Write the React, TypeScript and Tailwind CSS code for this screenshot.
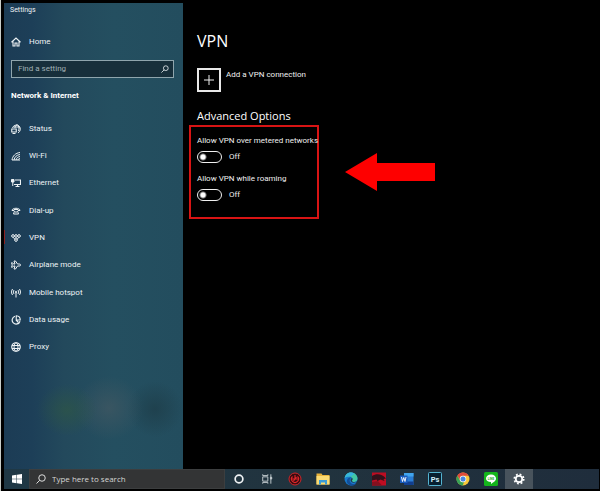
import type { ReactNode } from "react";

function Glyph({ children, size = "size-[10px]", box = "0 0 20 20" }: { children: ReactNode; size?: string; box?: string }) {
  return (
    <svg viewBox={box} className={`${size} shrink-0`} fill="none" stroke="currentColor" strokeWidth="2" aria-hidden="true">
      {children}
    </svg>
  );
}

const globe = (
  <>
    <circle cx="10" cy="10" r="8.500" strokeWidth="2.400" />
    <ellipse cx="10" cy="10" rx="4" ry="8.500" />
    <path d="M2 7h16M2 13h16" />
  </>
);

const items: { label: string; icon: ReactNode; active?: boolean }[] = [
  {
    label: "Status",
    icon: (
      <>
        <path d="M3 8a8 8 0 1 1 11 9.500M5 6h13M12 1c-3 2-4 5-4 7M13 1c3 3 4 8 2 13" />
        <path d="M1.500 10h9v6h-9zM3 19h6" strokeWidth="2.200" />
      </>
    ),
  },
  {
    label: "Wi-Fi",
    icon: <path d="M2 18C3 10 9 4 18 3M6 18c1-6 5-10 12-11M10 18c1-4 3-6 8-7M14 18c0-2 2-3 4-3M2 18h16" />,
  },
  {
    label: "Ethernet",
    icon: (
      <>
        <path d="M8 4h11v9H6M9 17h8M13 13v4" strokeWidth="2.300" />
        <path d="M1 3h5v5H1zM3.500 8v8" fill="currentColor" />
      </>
    ),
  },
  {
    label: "Dial-up",
    icon: (
      <>
        <path d="M2 9c0-6 16-6 16 0h-4V7H6v2z" />
        <path d="M7 10l-2 6h10l-2-6M8 12h4" />
      </>
    ),
  },
  {
    label: "VPN",
    active: true,
    icon: (
      <>
        <circle cx="4" cy="6" r="2.700" />
        <circle cx="10" cy="6" r="2.700" />
        <circle cx="16" cy="6" r="2.700" />
        <circle cx="10" cy="14" r="2.700" />
        <path d="M5 9l3 4M15 9l-3 4" />
      </>
    ),
  },
  {
    label: "Airplane mode",
    icon: (
      <path d="M19 10c0-1.500-1-2-2-2h-4L9 2H6l2 6H5L3 5.500H1L2.500 10 1 14.500h2L5 12h3l-2 6h3l4-6h4c1 0 2-.5 2-2z" />
    ),
  },
  {
    label: "Mobile hotspot",
    icon: (
      <>
        <circle cx="10" cy="8" r="1.500" />
        <path d="M10 9v10M6.500 12a5 5 0 0 1 0-8M13.500 12a5 5 0 0 0 0-8M3 14A9 9 0 0 1 3 2M17 14a9 9 0 0 0 0-12" />
      </>
    ),
  },
  {
    label: "Data usage",
    icon: (
      <>
        <path d="M8 2.500a8 8 0 1 0 10 10" strokeWidth="2.400" />
        <path d="M10.500 10V1.500a8.500 8.500 0 0 1 8 8.500zM10 10l5 5" strokeWidth="2.200" />
      </>
    ),
  },
  { label: "Proxy", icon: globe },
];

function Sidebar() {
  return (
    <aside className="flex w-[179px] shrink-0 flex-col bg-[radial-gradient(ellipse_30px_26px_at_63px_407px,rgba(48,88,66,0.6),transparent),radial-gradient(ellipse_34px_32px_at_105px_405px,rgba(66,88,98,0.7),transparent),radial-gradient(ellipse_28px_28px_at_151px_406px,rgba(30,62,74,0.8),transparent),linear-gradient(90deg,#1c3c55_0px,#1d3f58_28px,#23495c_60px,#244f60_110px,#234d5e_180px)] text-[#eef3f5]">
      <div className="px-1.5 pt-px text-[7px] leading-3">Settings</div>
      <a href="#home" className="mx-[7px] mt-[18px] flex h-4 items-center gap-2 text-[8px] leading-4">
        <Glyph>
          <path d="M1 10.500L10 2l9 8.500M4 9v9h4v-6h4v6h4V9" strokeWidth="2.200" />
        </Glyph>
        Home
      </a>
      <label className="mr-[9px] ml-[7px] mt-[10px] flex h-[18px] items-center border border-[#8fa5ad] bg-[#172f3b] pr-1 pl-1.5">
        <input
          type="search"
          aria-label="Find a setting"
          placeholder="Find a setting"
          className="min-w-0 flex-1 bg-transparent text-[8px] leading-4 outline-none placeholder:text-[#a1b0b6]"
        />
        <Glyph size="size-2">
          <circle cx="12" cy="8" r="6" />
          <path d="M8 12l-7 7" />
        </Glyph>
      </label>
      <h2 className="mt-[10px] px-[7px] text-[8px] leading-4 font-bold text-white">Network &amp; Internet</h2>
      <ul className="mt-[11px] grid h-[246px] grid-rows-9">
        {items.map((item) => (
          <li key={item.label} className="relative flex">
            {item.active && <span className="absolute top-1.5 left-0 h-3.5 w-px bg-[#8c2224]" />}
            <a href={`#${item.label}`} className="flex flex-1 items-center gap-2 pl-[7px] text-[8px] leading-4">
              <Glyph>{item.icon}</Glyph>
              {item.label}
            </a>
          </li>
        ))}
      </ul>
    </aside>
  );
}

function Toggle({ label }: { label: string }) {
  return (
    <label className="block text-[8px] leading-3 whitespace-nowrap">
      {label}
      <span className="mt-1 flex items-center gap-[7px]">
        <input
          type="checkbox"
          role="switch"
          className="h-3 w-[25px] shrink-0 appearance-none rounded-full border border-[#f0f0f0] bg-[radial-gradient(circle_at_5px_5px,#fff_2px,transparent_4px)]"
        />
        <span>Off</span>
      </span>
    </label>
  );
}

function Content() {
  return (
    <main className="min-w-0 flex-1 pl-[6px] text-[#f0f0f0]">
      <div className="pl-2">
        <h1 className="pt-[26px] font-['Open_Sans',sans-serif] text-[16px] leading-6 text-white">VPN</h1>
        <button type="button" className="mt-[15px] flex items-start gap-[5px] text-[8px] leading-[14px]">
          <span className="grid size-6 place-items-center border-2 border-[#e8e8e8]">
            <Glyph>
              <path d="M10 0v20M0 10h20" />
            </Glyph>
          </span>
          Add a VPN connection
        </button>
        <h2 className="mt-4 font-['Open_Sans',sans-serif] text-[11px] leading-4 text-white">Advanced Options</h2>
      </div>
      <div className="mt-px flex items-center gap-[26px]">
        <div className="flex h-[94px] w-[130px] flex-col gap-[10px] border-2 border-[#d81414] pt-2 pl-1.5">
          <Toggle label="Allow VPN over metered networks" />
          <Toggle label="Allow VPN while roaming" />
        </div>
        <svg viewBox="0 0 90 38" className="h-[38px] w-[90px] shrink-0 fill-[#fe0000]" aria-hidden="true">
          <path d="M0 19L32 0v10h58v18H32v10z" />
        </svg>
      </div>
    </main>
  );
}

const apps: { name: string; icon: ReactNode; active?: boolean }[] = [
  { name: "Cortana", icon: <circle cx="14" cy="14" r="9" fill="none" stroke="#eef2f4" strokeWidth="4" /> },
  {
    name: "Task View",
    icon: (
      <g fill="none" stroke="#c3ccd0" strokeWidth="2.200">
        <path d="M4 9h12v10H4zM4 3v3h12V3M4 25v-3h12v3M23 3v22" />
        <path d="M22 10h3v4h-3z" fill="#c3ccd0" />
      </g>
    ),
  },
  {
    name: "Power",
    icon: (
      <>
        <circle cx="14" cy="14" r="12" fill="#3a0c10" stroke="#cf2529" strokeWidth="2" />
        <path d="M14 6v8M9 9a7 7 0 1 0 10 0M8 14h12M11 18l6-8" fill="none" stroke="#e2272b" strokeWidth="2.200" />
      </>
    ),
  },
  {
    name: "File Explorer",
    icon: (
      <>
        <path d="M1 3h10l2 3h14v19H1z" fill="#e8b33c" />
        <path d="M1 8h26v17H1z" fill="#fbdb73" />
        <path d="M6 25v-9h16v9h-4v-4h-8v4z" fill="#3b9bd6" />
      </>
    ),
  },
  {
    name: "Edge",
    icon: (
      <>
        <circle cx="14" cy="14" r="13" fill="#1879cc" />
        <path d="M1.500 12C3 4 8 1 14 1c8 0 13 6 13 12 0 5-4 7-8 7-3 0-4-2-3-3 3-4-1-8-6-8-4 0-7 1-8.500 3z" fill="#42c7a4" />
        <path d="M1.500 12C3 4 8 1 14 1c3 0 5 1 7 2-4 4-6 6-11 6-4 0-7 1-8.500 3z" fill="#37b5dd" />
        <path d="M15 11c-5 2-5 9 0 12 4 2 8 1 10-2-3 9-16 8-19 0-2-6 3-11 9-10z" fill="#134f98" />
        <path d="M16 12c3 2 0 4 0 5 0 2 2 3 4 3 3 0 5-1 6-2-2 3-8 5-11 2-3-2-2-7 1-8z" fill="#243d4c" />
      </>
    ),
  },
  {
    name: "Game",
    icon: (
      <>
        <path d="M0 1h28v26H0z" fill="#bd0d22" />
        <path d="M0 8c9-5 19-5 28 5l-5 1 2 4-8-3-6 3-2-3-9 2z" fill="#33121b" />
        <path d="M0 20l12-2 8 9H0z" fill="#84101f" />
      </>
    ),
  },
  {
    name: "Word",
    icon: (
      <>
        <path d="M8 2h19v24H8z" fill="#2b7cd3" />
        <path d="M8 2h19v7H8z" fill="#41a5ee" />
        <path d="M8 19h19v7H8z" fill="#123f8f" />
        <path d="M0 7h15v15H0z" fill="#185abd" />
        <path d="M3 10l2 9 2.500-8 2.500 8 2-9" fill="none" stroke="#fff" strokeWidth="1.800" />
      </>
    ),
  },
  {
    name: "Photoshop",
    icon: (
      <>
        <rect x="1" y="1" width="26" height="26" rx="2" fill="#071f30" stroke="#55b5d2" strokeWidth="2" />
        <text x="14" y="19" textAnchor="middle" fill="#d3f1fb" fontSize="15" fontWeight="700">
          Ps
        </text>
      </>
    ),
  },
  {
    name: "Chrome",
    icon: (
      <>
        <circle cx="14" cy="14" r="13" fill="#f8c83b" />
        <path d="M2.700 7.500A13 13 0 0 1 25.300 7.500H14a6.500 6.500 0 0 0-6 9z" fill="#df4a3c" />
        <path d="M2.700 7.500L8.400 17.300A6.500 6.500 0 0 0 16 20.200L13.500 27A13 13 0 0 1 2.700 7.500z" fill="#39a357" />
        <circle cx="14" cy="14" r="6.500" fill="#f3f6f8" />
        <circle cx="14" cy="14" r="5" fill="#4a86e0" />
      </>
    ),
  },
  {
    name: "LINE",
    icon: (
      <>
        <rect width="28" height="28" rx="3" fill="#14b51c" />
        <path d="M14 5c6 0 10 3.500 10 8 0 5-6 8-10 11v-4C8 20 4 17 4 13s4-8 10-8z" fill="#fff" />
        <text x="14" y="15" textAnchor="middle" fill="#14a51c" fontSize="6" fontWeight="700">
          LINE
        </text>
      </>
    ),
  },
  {
    name: "Settings",
    active: true,
    icon: (
      <g fill="none" stroke="#fff">
        <circle cx="14" cy="14" r="7.500" strokeWidth="4" />
        <circle cx="14" cy="14" r="11" strokeWidth="4" strokeDasharray="4.300 4.340" />
      </g>
    ),
  },
];

function Taskbar() {
  return (
    <footer className="flex h-5 bg-gradient-to-r from-[#1f3845] via-[#21333e] to-[#1f2d3c]">
      <button type="button" aria-label="Start" className="grid w-[25px] shrink-0 place-items-center">
        <svg viewBox="0 0 20 20" className="size-[10px] fill-white" aria-hidden="true">
          <path d="M0 3l9-1.300V9.500H0zM10 1.500L20 0v9.500H10zM0 10.500h9v7.800L0 17zM10 10.500h10V20l-10-1.500z" />
        </svg>
      </button>
      <label className="flex w-[196px] shrink-0 items-center gap-1.5 border border-[#3c3e3f] bg-[#333435] pl-1.5 text-[#dcdcdc]">
        <Glyph>
          <circle cx="12" cy="8" r="6.500" />
          <path d="M7.500 12.500L1 19" />
        </Glyph>
        <input
          type="search"
          aria-label="Type here to search"
          placeholder="Type here to search"
          className="min-w-0 flex-1 bg-transparent font-['Open_Sans',sans-serif] text-[8px] leading-4 outline-none placeholder:text-[#d4d4d4]"
        />
      </label>
      <div className="flex">
        {apps.map((app) => (
          <button
            key={app.name}
            type="button"
            aria-label={app.name}
            className={`grid w-7 place-items-center ${app.active ? "bg-[#48535c]" : ""}`}
          >
            <svg viewBox="0 0 28 28" className={app.name === "Cortana" || app.name === "Task View" || app.active ? "size-3" : "size-[14px]"} aria-hidden="true">
              {app.icon}
            </svg>
          </button>
        ))}
      </div>
    </footer>
  );
}

export default function App() {
  return (
    <div className="flex min-h-screen flex-col border-l border-[#c9cdc8] bg-black pt-[3px] pr-px pb-0.5 pl-[3px] font-[Roboto,'Open_Sans',sans-serif]">
      <div className="flex flex-1">
        <Sidebar />
        <Content />
      </div>
      <Taskbar />
    </div>
  );
}
